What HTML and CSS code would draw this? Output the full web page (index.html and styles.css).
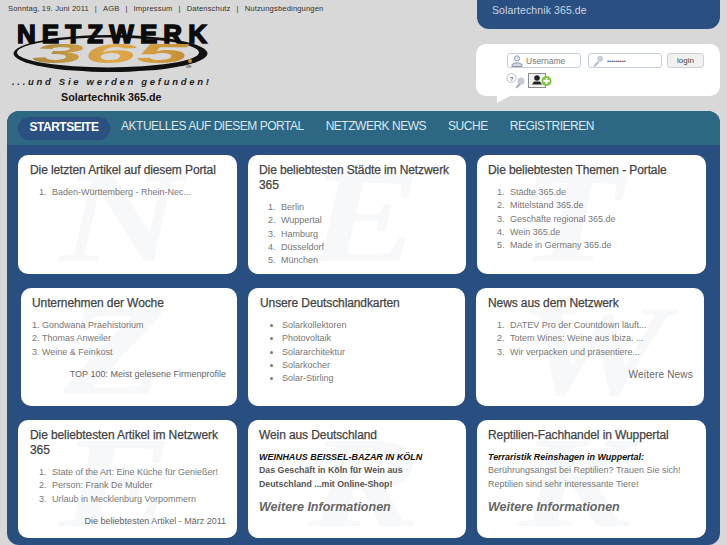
FILE: index.html
```html
<!DOCTYPE html>
<html lang="de">
<head>
    <meta charset="UTF-8">
    <title>Solartechnik 365.de</title>
    <link rel="stylesheet" href="styles.css">
</head>
<body>
    <header class="top">
        <div class="brand">
            <div class="meta">
                <span>Sonntag, 19. Juni 2011</span><i>|</i><a>AGB</a><i>|</i><a>Impressum</a><i>|</i><a>Datenschutz</a><i>|</i><a>Nutzungsbedingungen</a>
            </div>
            <svg class="logo" width="204" height="56" viewBox="0 0 204 56">
                <defs>
                    <linearGradient id="gold" x1="0" y1="0" x2="1" y2="0">
                        <stop offset="0" stop-color="#a8863f"/>
                        <stop offset="0.5" stop-color="#e0a94c"/>
                        <stop offset="1" stop-color="#c48f35"/>
                    </linearGradient>
                </defs>
                <ellipse cx="98.500" cy="35.500" rx="97" ry="18.500" fill="#111"/>
                <ellipse cx="96" cy="34.500" rx="91" ry="15" fill="#d8d8d8"/>
                <text class="logo-name" x="5" y="25" textLength="190" lengthAdjust="spacing">NETZWERK</text>
                <text class="logo-num" x="20" y="45" textLength="156" lengthAdjust="spacingAndGlyphs" fill="url(#gold)">365</text>
                <circle cx="178" cy="43" r="2" fill="#c48f35"/>
                <text class="logo-de" x="174" y="50">de</text>
            </svg>
            <div class="slogan">...und Sie werden gefunden!</div>
            <div class="portal">Solartechnik 365.de</div>
        </div>
        <div class="side">
            <div class="tab">Solartechnik 365.de</div>
            <form class="login">
                <div class="login-row">
                    <label class="field">
                        <svg width="12" height="12" viewBox="0 0 12 12"><circle cx="6" cy="3.400" r="2.600" fill="#e4e8ee" stroke="#8f98a5"/><path d="M1 11.500v-2l3-1.500h4l3 1.500v2z" fill="#d5dae2" stroke="#8f98a5"/></svg>
                        <span>Username</span>
                    </label>
                    <label class="field">
                        <svg width="12" height="12" viewBox="0 0 12 12"><circle cx="8.200" cy="3.800" r="3" fill="#c8ced8"/><path d="M6 6 1.500 10.500v1h2l4-4.500z" fill="#b4bcc8"/></svg>
                        <span class="dots">•••••••••</span>
                    </label>
                    <button type="button" class="login-btn">login</button>
                </div>
                <div class="login-icons">
                    <svg width="20" height="16" viewBox="0 0 20 16"><circle cx="5.500" cy="5" r="4.500" fill="#fff" stroke="#b9c0ca"/><text class="help" x="3.800" y="7.500">?</text><circle cx="15" cy="8" r="3.500" fill="#c3cad5"/><path d="M13 10 9.500 14.500l1.500 1 4-4z" fill="#aab3c0"/></svg>
                    <svg width="25" height="16" viewBox="0 0 25 16"><rect x="0.500" y="0.500" width="17" height="14" fill="#f1f1f1" stroke="#8d8d8d"/><circle cx="9" cy="5" r="2.800" fill="#222"/><path d="M4 11.500 6 8.500h6l2 3z" fill="#222"/><circle cx="18.500" cy="8" r="5" fill="#7cc63c"/><path d="M18.500 5v6M15.500 8h6" stroke="#fff" stroke-width="2"/></svg>
                </div>
            </form>
        </div>
    </header>

    <main class="panel">
        <nav class="nav">
            <a class="active">STARTSEITE</a>
            <a>AKTUELLES AUF DIESEM PORTAL</a>
            <a>NETZWERK NEWS</a>
            <a>SUCHE</a>
            <a>REGISTRIEREN</a>
        </nav>
        <div class="content">
            <section class="row row-top">
                <article class="card">
                    <b class="mark">N</b>
                    <h2>Die letzten Artikel auf diesem Portal</h2>
                    <ol>
                        <li>Baden-Württemberg - Rhein-Nec...</li>
                    </ol>
                </article>
                <article class="card">
                    <b class="mark">E</b>
                    <h2>Die beliebtesten Städte im Netzwerk 365</h2>
                    <ol>
                        <li>Berlin</li>
                        <li>Wuppertal</li>
                        <li>Hamburg</li>
                        <li>Düsseldorf</li>
                        <li>München</li>
                    </ol>
                </article>
                <article class="card">
                    <b class="mark">T</b>
                    <h2>Die beliebtesten Themen - Portale</h2>
                    <ol>
                        <li>Städte 365.de</li>
                        <li>Mittelstand 365.de</li>
                        <li>Geschäfte regional 365.de</li>
                        <li>Wein 365.de</li>
                        <li>Made in Germany 365.de</li>
                    </ol>
                </article>
            </section>
            <section class="row row-mid">
                <article class="card">
                    <b class="mark">Z</b>
                    <h2>Unternehmen der Woche</h2>
                    <ol class="inside">
                        <li>Gondwana Praehistorium</li>
                        <li>Thomas Anweiler</li>
                        <li>Weine &amp; Feinkost</li>
                    </ol>
                    <p class="more">TOP 100: Meist gelesene Firmenprofile</p>
                </article>
                <article class="card">
                    <h2>Unsere Deutschlandkarten</h2>
                    <ul>
                        <li>Solarkollektoren</li>
                        <li>Photovoltaik</li>
                        <li>Solararchitektur</li>
                        <li>Solarkocher</li>
                        <li>Solar-Stirling</li>
                    </ul>
                </article>
                <article class="card">
                    <b class="mark">W</b>
                    <h2>News aus dem Netzwerk</h2>
                    <ol>
                        <li>DATEV Pro der Countdown läuft...</li>
                        <li>Totem Wines: Weine aus Ibiza. ...</li>
                        <li>Wir verpacken und präsentiere...</li>
                    </ol>
                    <p class="more more-big">Weitere News</p>
                </article>
            </section>
            <section class="row">
                <article class="card">
                    <b class="mark">E</b>
                    <h2>Die beliebtesten Artikel im Netzwerk 365</h2>
                    <ol>
                        <li>State of the Art: Eine Küche für Genießer!</li>
                        <li>Person: Frank De Mulder</li>
                        <li>Urlaub in Mecklenburg Vorpommern</li>
                    </ol>
                    <p class="more">Die beliebtesten Artikel - März 2011</p>
                </article>
                <article class="card">
                    <b class="mark">R</b>
                    <h2>Wein aus Deutschland</h2>
                    <p class="lead">WEINHAUS BEISSEL-BAZAR IN KÖLN</p>
                    <p class="copy strong">Das Geschäft in Köln für Wein aus<br>Deutschland ...mit Online-Shop!</p>
                    <p class="info">Weitere Informationen</p>
                </article>
                <article class="card">
                    <b class="mark">K</b>
                    <h2>Reptilien-Fachhandel in Wuppertal</h2>
                    <p class="lead">Terraristik Reinshagen in Wuppertal:</p>
                    <p class="copy">Berührungsangst bei Reptilien? Trauen Sie sich!<br>Reptilien sind sehr interessante Tiere!</p>
                    <p class="info">Weitere Informationen</p>
                </article>
            </section>
        </div>
    </main>
</body>
</html>
```

FILE: styles.css
```css
* {
    box-sizing: border-box;
}

html, body {
    height: 545px;
    overflow: hidden;
}

body {
    margin: 0;
    background-color: #d8d8d8;
    font-family: "Liberation Sans", Arial, sans-serif;
}

.top {
    display: flex;
    justify-content: space-between;
    height: 111px;
    padding-left: 8px;
}

.brand {
    display: flex;
    flex-direction: column;
}

.meta {
    height: 17px;
    padding-top: 3px;
    font-size: 7.6px;
    line-height: 11px;
    letter-spacing: 0.15px;
    color: #333;
}

.meta i {
    margin: 0 6px;
    font-style: normal;
}

.logo {
    display: block;
    margin: 1px 0 0 4px;
}

.logo-name {
    font: bold 26px "Liberation Sans", Arial, sans-serif;
    fill: #0c0c0c;
    stroke: #0c0c0c;
    stroke-width: 1.5px;
}

.logo-num {
    font: italic bold 28px "Liberation Sans", Arial, sans-serif;
}

.logo-de {
    font: 5px "Liberation Sans", Arial, sans-serif;
    fill: #444;
}

.slogan {
    margin: 2px 0 0 4px;
    font-size: 9.5px;
    font-style: italic;
    font-weight: bold;
    line-height: 12px;
    letter-spacing: 2.7px;
    white-space: nowrap;
    color: #222;
}

.portal {
    margin: 2px 0 0 53px;
    font-size: 10.7px;
    font-weight: bold;
    line-height: 14px;
    color: #111;
}

.side {
    display: flex;
    flex-direction: column;
    width: 244px;
    margin-right: 7px;
}

.tab {
    height: 29px;
    margin-left: 1px;
    padding: 3px 0 0 15px;
    background-color: #2a5082;
    border-radius: 0 0 12px 12px;
    font-size: 10.5px;
    line-height: 14px;
    letter-spacing: 0.1px;
    color: #c9d5e4;
}

.login {
    position: relative;
    height: 52px;
    margin-top: 15px;
    padding: 9px 0 0 31px;
    background-color: #fff;
    border-radius: 10px;
}

.login::after {
    content: "";
    position: absolute;
    left: 21px;
    bottom: -7px;
    border-top: 7px solid #fff;
    border-right: 13px solid transparent;
}

.login-row {
    display: flex;
    gap: 7px;
}

.field {
    display: flex;
    align-items: center;
    gap: 3px;
    width: 74px;
    height: 15px;
    padding: 1px 0 0 3px;
    border: 1px solid #c5cfdc;
    border-radius: 3px;
    font-size: 8.5px;
    color: #777;
}

.field .dots {
    font-size: 6px;
    color: #555;
}

.login-btn {
    width: 37px;
    height: 15px;
    margin-left: -2px;
    padding: 0;
    background-color: #f0f0f0;
    border: 1px solid #ccd2da;
    border-radius: 3px;
    font: 8px "Liberation Sans", Arial, sans-serif;
    color: #444;
}

.login-icons {
    display: flex;
    align-items: flex-start;
    gap: 2px;
    margin-top: 5px;
    margin-left: -1px;
}

.login-icons svg {
    display: block;
}

.help {
    font: bold 6px "Liberation Sans", Arial, sans-serif;
    fill: #667;
}

.panel {
    width: 713px;
    height: 434px;
    margin-left: 7px;
    background-color: #284f80;
    border-radius: 12px;
    overflow: hidden;
}

.nav {
    display: flex;
    align-items: center;
    gap: 22px;
    height: 34px;
    padding: 0 0 4px 11px;
    background-color: #2e6783;
}

.nav a {
    font-size: 12px;
    line-height: 16px;
    letter-spacing: -0.48px;
    color: #dbe8ef;
}

.nav .active {
    width: 92px;
    height: 23px;
    margin-top: 4px;
    margin-right: -11px;
    padding-top: 2px;
    background-color: #2a5082;
    border-radius: 12px;
    font-weight: bold;
    text-align: center;
    color: #fff;
}

.content {
    display: flex;
    flex-direction: column;
    gap: 14px;
    padding: 10px 14px 0 11px;
}

.row {
    display: grid;
    grid-template-columns: 219px 218px 229px;
    gap: 11px;
    height: 118px;
}

.row-top {
    height: 119px;
}

.row-mid {
    grid-template-columns: 216px 217px 228px;
    padding-left: 3px;
}

.card {
    position: relative;
    padding: 8px 11px 0;
    background-color: #fff;
    border-radius: 10px;
}

.card:first-child {
    padding-left: 12px;
}

.row-mid .card {
    padding-left: 12px;
}

.row-mid .card:first-child {
    padding-left: 11px;
}

/* big faint letter behind each box */
.mark {
    position: absolute;
    left: 42px;
    top: 7px;
    font: italic bold 130px/110px "Liberation Serif", serif;
    color: #f7f8fa;
    transform: scaleX(1.3);
    transform-origin: left center;
}

.card:nth-child(2) .mark {
    left: 60px;
}

.card h2, .card ol, .card ul, .card p {
    position: relative;
}

h2 {
    margin: 0 0 8px;
    font-size: 12px;
    font-weight: normal;
    line-height: 15px;
    letter-spacing: -0.1px;
    -webkit-text-stroke: 0.25px #444;
    color: #444;
}

ol, ul {
    margin: 0;
    padding-left: 22px;
    font-size: 9px;
    line-height: 13.35px;
    color: #777;
}

ol {
    padding-left: 19px;
}

ol li {
    padding-left: 3px;
}

.card ol.inside {
    padding-left: 0;
    list-style-position: inside;
}

.card ol.inside li {
    padding-left: 0;
}

.more {
    margin: 9px 0 0;
    font-size: 9px;
    line-height: 13px;
    text-align: right;
    color: #666;
}

.more-big {
    font-size: 10px;
    letter-spacing: 0.2px;
}

.lead {
    margin: 1px 0 0;
    font-size: 9px;
    font-style: italic;
    font-weight: bold;
    line-height: 13.35px;
    letter-spacing: -0.03px;
    color: #111;
}

.copy {
    margin: 0;
    font-size: 9px;
    line-height: 13.35px;
    color: #777;
}

.copy.strong {
    font-size: 8.8px;
    font-weight: bold;
    color: #555;
}

.info {
    margin: 8px 0 0;
    font-size: 12.5px;
    font-style: italic;
    font-weight: bold;
    line-height: 16px;
    color: #666;
}
```
